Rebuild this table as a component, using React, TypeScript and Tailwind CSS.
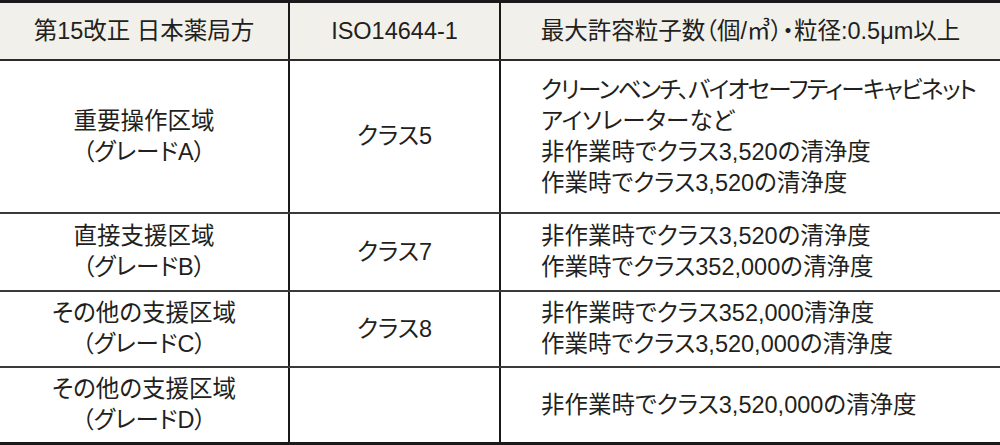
const rows = [
  {
    grade: ['重要操作区域', '（グレードA）'],
    iso: 'クラス5',
    detail: [
      'クリーンベンチ、バイオセーフティーキャビネット',
      'アイソレーターなど',
      '非作業時でクラス3,520の清浄度',
      '作業時でクラス3,520の清浄度',
    ],
    height: 'h-[153px]',
  },
  {
    grade: ['直接支援区域', '（グレードB）'],
    iso: 'クラス7',
    detail: ['非作業時でクラス3,520の清浄度', '作業時でクラス352,000の清浄度'],
    height: 'h-[78px]',
  },
  {
    grade: ['その他の支援区域', '（グレードC）'],
    iso: 'クラス8',
    detail: ['非作業時でクラス352,000清浄度', '作業時でクラス3,520,000の清浄度'],
    height: 'h-[76px]',
  },
  {
    grade: ['その他の支援区域', '（グレードD）'],
    iso: '',
    detail: ['非作業時でクラス3,520,000の清浄度'],
    height: 'h-[74px]',
  },
];

export default function App() {
  return (
    <div
      className="w-[1000px] bg-white text-[#231f20] text-[23.5px] leading-[31px] [font-feature-settings:'palt'] border-t-[3px] border-b-[3px] border-[#1a1a1a]"
      style={{ fontFamily: '"Liberation Sans", "Noto Sans CJK JP", sans-serif' }}
    >
      {/* ヘッダー */}
      <div className="flex h-[58px] bg-[#f2f0ea] border-b-2 border-[#2a2a2a]">
        <div className="w-[290px] flex items-center justify-center border-r-2 border-[#1a1a1a]">
          第15改正 日本薬局方
        </div>
        <div className="w-[211px] flex items-center justify-center border-r-2 border-[#1a1a1a]">
          ISO14644-1
        </div>
        <div className="flex-1 flex items-center justify-center whitespace-nowrap">
          最大許容粒子数（個/㎥）・粒径:0.5μm以上
        </div>
      </div>

      {rows.map((row, i) => (
        <div
          key={i}
          className={`flex ${row.height} ${i < rows.length - 1 ? 'border-b-2 border-[#3a3a3a]' : ''}`}
        >
          <div className="w-[290px] flex flex-col items-center justify-center border-r-2 border-[#1a1a1a]">
            {row.grade.map((g) => (
              <span key={g}>{g}</span>
            ))}
          </div>
          <div className="w-[211px] flex items-center justify-center border-r-2 border-[#1a1a1a]">
            {row.iso}
          </div>
          <div className="flex-1 flex flex-col justify-center pl-[40px]">
            {row.detail.map((d, j) => (
              <span
                key={d}
                className={`whitespace-nowrap ${i === 0 && j === 0 ? 'tracking-[-1.6px]' : ''}`}
              >
                {d}
              </span>
            ))}
          </div>
        </div>
      ))}
    </div>
  );
}
